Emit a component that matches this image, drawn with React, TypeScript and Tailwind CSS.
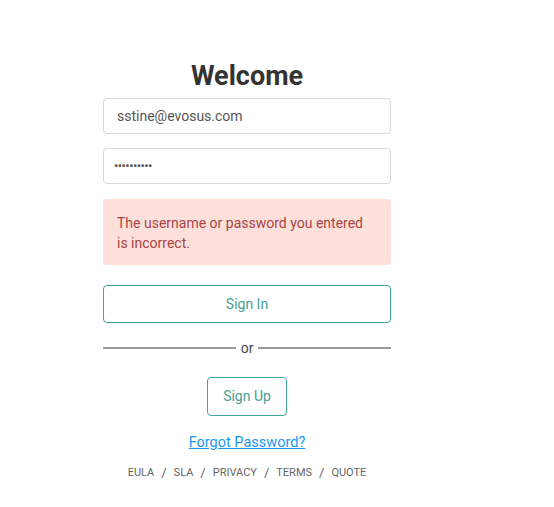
import React from "react";

export default function App() {
  return (
    <div className="w-[554px] h-[507px] bg-white" style={{ fontFamily: "Roboto, 'Liberation Sans', sans-serif" }}>
      <div className="w-[288px] ml-[103px] pt-[58px] flex flex-col">
        <h1 className="text-center text-[27px] leading-[36px] font-bold text-[#333]">Welcome</h1>
        <div className="mt-[4px] h-[36px] border border-[#d9d9d9] rounded-[4px] flex items-center px-[13px] text-[14px] text-[#555]">
          sstine@evosus.com
        </div>
        <div className="mt-[14px] h-[36px] border border-[#d9d9d9] rounded-[4px] flex items-center px-[10px] text-[13px] text-[#555] tracking-[-0.6px]">
          ••••••••••
        </div>
        <div className="mt-[15px] h-[66px] bg-[#fde0dc] rounded-[4px] px-[14px] pt-[14px] text-[14px] leading-[20px] text-[#a94442]">
          The username or password you entered is incorrect.
        </div>
        <div className="mt-[20px] h-[38px] border border-[#3fa69a] rounded-[4px] flex items-center justify-center text-[14px] text-[#4a9e94]">
          Sign In
        </div>
        <div className="mt-[15px] flex items-center h-[20px]">
          <div className="flex-1 h-[2px] bg-[#999]" />
          <span className="px-[5px] text-[14px] text-[#444] leading-[20px]">or</span>
          <div className="flex-1 h-[2px] bg-[#999]" />
        </div>
        <div className="mt-[19px] flex justify-center">
          <div className="w-[80px] h-[39px] border border-[#3fa69a] rounded-[4px] flex items-center justify-center text-[14px] text-[#4a9e94]">
            Sign Up
          </div>
        </div>
        <div className="mt-[14px] text-center">
          <a className="text-[14.5px] text-[#2196f3] underline leading-[20px]">Forgot Password?</a>
        </div>
        <div className="mt-[11px] flex justify-center items-center gap-[7px] text-[11px] text-[#666] leading-[16px]">
          <span>EULA</span>
          <span className="text-[13px]">/</span>
          <span>SLA</span>
          <span className="text-[13px]">/</span>
          <span>PRIVACY</span>
          <span className="text-[13px]">/</span>
          <span>TERMS</span>
          <span className="text-[13px]">/</span>
          <span>QUOTE</span>
        </div>
      </div>
    </div>
  );
}
